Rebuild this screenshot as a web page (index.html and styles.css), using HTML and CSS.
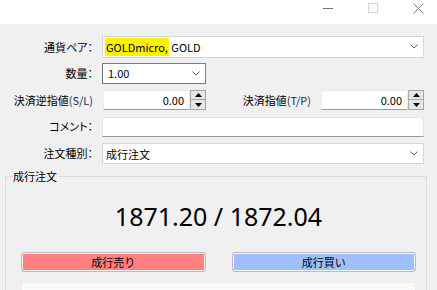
FILE: index.html
```html
<!DOCTYPE html>
<html lang="ja">
<head>
<meta charset="utf-8">
<title>注文</title>
<link rel="stylesheet" href="styles.css">
</head>
<body>
<div class="window">
  <div class="titlebar">
    <svg class="ctl" width="11" height="11" viewBox="0 0 11 11"><line x1="0" y1="5.5" x2="10" y2="5.5" stroke="#707070" stroke-width="1"/></svg>
    <svg class="ctl" width="11" height="11" viewBox="0 0 11 11"><rect x="0.5" y="0.5" width="9" height="9" fill="none" stroke="#d4d4d4" stroke-width="1"/></svg>
    <svg class="ctl" width="11" height="11" viewBox="0 0 11 11"><path d="M0.5 0.5 L10.5 10.5 M10.5 0.5 L0.5 10.5" stroke="#7a7a7a" stroke-width="1" fill="none"/></svg>
  </div>
  <div class="content">
    <div class="form">
      <div class="lbl">通貨ペア：</div>
      <div class="combo combo-pair">
        <span class="combo-text"><span class="hl">GOLDmicro,</span> GOLD</span>
        <svg class="chev" width="8" height="5" viewBox="0 0 8 5"><path d="M0.5 0.5 L4 4 L7.5 0.5" fill="none" stroke="#606060" stroke-width="1"/></svg>
      </div>

      <div class="lbl">数量：</div>
      <div class="combo combo-qty">
        <span class="combo-text">1.00</span>
        <svg class="chev" width="8" height="5" viewBox="0 0 8 5"><path d="M0.5 0.5 L4 4 L7.5 0.5" fill="none" stroke="#606060" stroke-width="1"/></svg>
      </div>

      <div class="lbl">決済逆指値<span class="paren">(S/L)</span></div>
      <div class="row-split">
        <div class="spin">
          <div class="spin-field">0.00</div>
          <div class="spin-btns">
            <span class="spin-btn"><svg width="7" height="4" viewBox="0 0 7 4"><path d="M3.5 0 L7 4 L0 4 Z" fill="#000"/></svg></span>
            <span class="spin-btn"><svg width="7" height="4" viewBox="0 0 7 4"><path d="M0 0 L7 0 L3.5 4 Z" fill="#000"/></svg></span>
          </div>
        </div>
        <div class="lbl lbl-tp">決済指値<span class="paren">(T/P)</span></div>
        <div class="spin">
          <div class="spin-field">0.00</div>
          <div class="spin-btns">
            <span class="spin-btn"><svg width="7" height="4" viewBox="0 0 7 4"><path d="M3.5 0 L7 4 L0 4 Z" fill="#000"/></svg></span>
            <span class="spin-btn"><svg width="7" height="4" viewBox="0 0 7 4"><path d="M0 0 L7 0 L3.5 4 Z" fill="#000"/></svg></span>
          </div>
        </div>
      </div>

      <div class="lbl">コメント：</div>
      <div class="textbox"></div>

      <div class="lbl">注文種別：</div>
      <div class="combo combo-type">
        <span class="combo-text">成行注文</span>
        <svg class="chev" width="8" height="5" viewBox="0 0 8 5"><path d="M0.5 0.5 L4 4 L7.5 0.5" fill="none" stroke="#606060" stroke-width="1"/></svg>
      </div>
    </div>

    <div class="group">
      <div class="legend">成行注文</div>
      <div class="price">1871.20 / 1872.04</div>
      <div class="buttons">
        <button class="btn btn-sell">成行売り</button>
        <button class="btn btn-buy">成行買い</button>
      </div>
      <div class="panel"></div>
    </div>
  </div>
</div>
</body>
</html>
```

FILE: styles.css
```css
html, body {
  margin: 0;
  padding: 0;
  overflow: hidden;
}
body {
  font-family: "Noto Sans CJK JP", "Noto Sans", sans-serif;
  font-size: 11px;
  color: #000;
  background: #f0f0f0;
}
.window {
  width: 437px;
  height: 290px;
  overflow: hidden;
  background: #f0f0f0;
}
.titlebar {
  height: 24px;
  background: #fff;
  display: flex;
  justify-content: flex-end;
  align-items: flex-start;
  padding: 3px 13px 0 0;
  box-sizing: border-box;
  gap: 34px;
}
.ctl {
  display: block;
}
.content {
  padding-top: 9.5px;
}
.form {
  display: grid;
  grid-template-columns: 93px 322px;
  column-gap: 9px;
  grid-auto-rows: 26.5px;
  align-items: center;
}
.lbl {
  justify-self: end;
  white-space: nowrap;
  font-feature-settings: "palt";
  line-height: 14px;
}
.paren {
  color: #1c2a5c;
}
.combo {
  background: #fff;
  border: 1px solid #d6d6d6;
  box-sizing: border-box;
  display: flex;
  align-items: center;
  justify-content: space-between;
  padding: 0 5px 0 2px;
}
.combo-pair {
  height: 22px;
  margin-top: -0.5px;
}
.combo-qty {
  width: 104px;
  height: 21px;
  border-color: #7a7a7a;
  padding-left: 5px;
}
.combo-type {
  height: 21px;
  margin-top: 2px;
  padding-left: 3px;
}
.combo-text {
  line-height: 18px;
  white-space: nowrap;
}
.hl {
  background: #fff200;
  display: inline-block;
  padding: 0 1px;
  line-height: 18px;
}
.chev {
  display: block;
}
.row-split {
  display: flex;
  align-items: center;
}
.lbl-tp {
  flex: 1;
  text-align: right;
  margin-right: 9px;
}
.spin {
  width: 104px;
  height: 20px;
  display: flex;
  flex: none;
}
.spin-field {
  flex: 1;
  background: #fff;
  border: 1px solid #ececec;
  border-bottom-color: #9a9a9a;
  box-sizing: border-box;
  text-align: right;
  padding-right: 5px;
  line-height: 18px;
  margin-left: 1px;
}
.spin-btns {
  width: 16px;
  display: flex;
  flex-direction: column;
  border: 1px solid #a6a6a6;
  box-sizing: border-box;
  background: #e6e6e6;
}
.spin-btn {
  flex: 1;
  display: flex;
  align-items: center;
  justify-content: center;
}
.spin-btn + .spin-btn {
  border-top: 1px solid #a6a6a6;
}
.spin-btn svg {
  display: block;
}
.textbox {
  height: 20px;
  background: #fff;
  border: 1px solid #e6e6e6;
  border-bottom-color: #9a9a9a;
  box-sizing: border-box;
  margin-top: 1px;
}
.group {
  margin: 10px 10px 0 5px;
  border: 1px solid #dcdcdc;
  padding: 0 10px 0 15px;
  height: 160px;
}
.legend {
  width: max-content;
  margin: -8px 0 0 -9px;
  padding: 0 1px;
  background: #f0f0f0;
  line-height: 14px;
}
.price {
  text-align: center;
  font-family: "Noto Sans", sans-serif;
  font-size: 25px;
  line-height: 30px;
  margin-top: 18px;
}
.buttons {
  display: flex;
  gap: 26px;
  margin-top: 21px;
}
.btn {
  flex: 1;
  height: 20px;
  font: inherit;
  font-size: 11px;
  color: #000;
  border: 1px solid #bdbdbd;
  border-radius: 3px;
  box-shadow: inset 0 0 0 1px #f4f4f4;
  padding: 0;
  line-height: 16px;
}
.btn-sell {
  background: #ff8080;
}
.btn-buy {
  background: #a0bfff;
}
.panel {
  margin-top: 10px;
  height: 40px;
  background: #fafafa;
  border: 1px solid #ececec;
  border-radius: 2px;
}
```
